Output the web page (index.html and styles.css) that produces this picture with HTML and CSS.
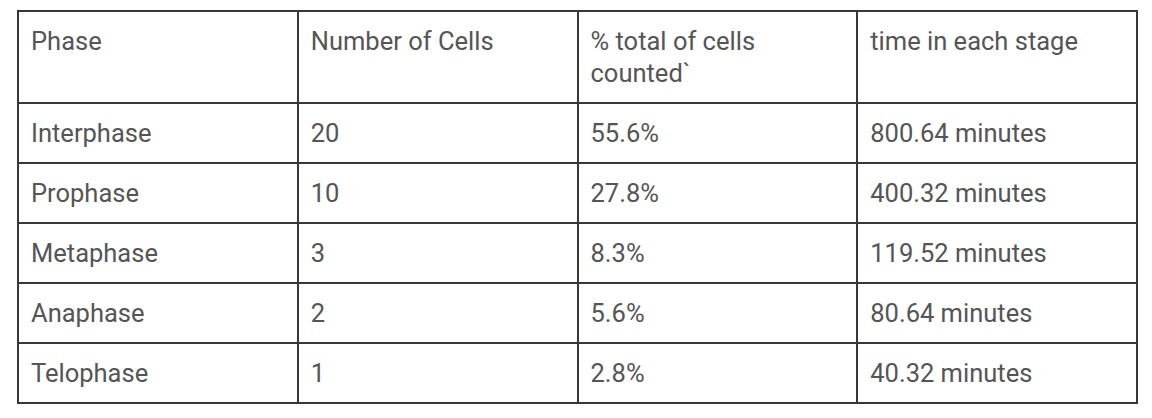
FILE: index.html
```html
<!DOCTYPE html>
<html>
<head>
<meta charset="utf-8">
<link rel="stylesheet" href="styles.css">
</head>
<body>
<div class="page">
  <table class="data">
    <colgroup><col class="c"><col class="c"><col class="c"><col class="c"></colgroup>
    <tr class="head">
      <td>Phase</td>
      <td>Number of Cells</td>
      <td>% total of cells counted`</td>
      <td>time in each stage</td>
    </tr>
    <tr><td>Interphase</td><td>20</td><td>55.6%</td><td>800.64 minutes</td></tr>
    <tr><td>Prophase</td><td>10</td><td>27.8%</td><td>400.32 minutes</td></tr>
    <tr><td>Metaphase</td><td>3</td><td>8.3%</td><td>119.52 minutes</td></tr>
    <tr><td>Anaphase</td><td>2</td><td>5.6%</td><td>80.64 minutes</td></tr>
    <tr><td>Telophase</td><td>1</td><td>2.8%</td><td>40.32 minutes</td></tr>
  </table>
</div>
</body>
</html>
```

FILE: styles.css
```css
html, body {
  margin: 0;
  padding: 0;
  background: #ffffff;
}
.page {
  padding: 10px 0 0 17px;
}
.data {
  border-collapse: collapse;
  table-layout: fixed;
  width: 1121px;
  font-family: Roboto, "Liberation Sans", Arial, sans-serif;
  font-size: 25.5px;
  line-height: 32px;
  color: #555555;
}
.data .c {
  width: 25%;
}
.data td {
  border: 2px solid #383838;
  padding: 13px 12px;
  vertical-align: top;
  text-align: left;
  box-sizing: border-box;
}
.data tr {
  height: 60px;
}
.data tr.head {
  height: 92px;
}
.data tr.head td {
  padding-right: 40px;
}
```
